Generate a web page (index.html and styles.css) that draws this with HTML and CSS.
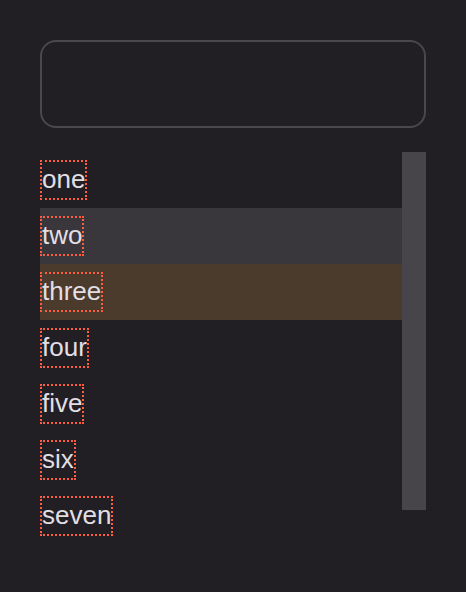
FILE: index.html
```html
<!DOCTYPE html>
<html>
<head>
<meta charset="utf-8">
<link rel="stylesheet" href="styles.css">
</head>
<body>
<div class="page">
  <div class="field"></div>
  <div class="listwrap">
    <ul class="list">
      <li class="item"><span class="label">one</span></li>
      <li class="item hover"><span class="label">two</span></li>
      <li class="item selected"><span class="label">three</span></li>
      <li class="item"><span class="label">four</span></li>
      <li class="item"><span class="label">five</span></li>
      <li class="item"><span class="label">six</span></li>
      <li class="item"><span class="label">seven</span></li>
    </ul>
    <div class="scrollbar"></div>
  </div>
</div>
</body>
</html>
```
FILE: styles.css
```css
html, body {
  margin: 0;
  padding: 0;
  background: #221f24;
  width: 466px;
  height: 592px;
  overflow: hidden;
}
.page {
  padding: 40px;
  display: flex;
  flex-direction: column;
  gap: 24px;
  font-family: "Liberation Sans", Arial, sans-serif;
}
.field {
  height: 84px;
  border: 2px solid #4a474d;
  border-radius: 16px;
}
.listwrap {
  display: flex;
  height: 358px;
}
.list {
  list-style: none;
  margin: 0;
  padding: 0;
  flex: 1;
  display: flex;
  flex-direction: column;
}
.item {
  height: 56px;
  flex: none;
  display: flex;
  align-items: center;
}
.item.hover { background: #39363c; }
.item.selected { background: #4a3b2c; }
.label {
  display: inline-block;
  box-sizing: border-box;
  border: 2px dotted #ff5c42;
  padding: 0 0 2px 0;
  height: 40px;
  line-height: 34px;
  font-size: 26px;
  color: #e2dfe4;
}
.scrollbar {
  width: 24px;
  background: #48454a;
  flex: none;
}
```
